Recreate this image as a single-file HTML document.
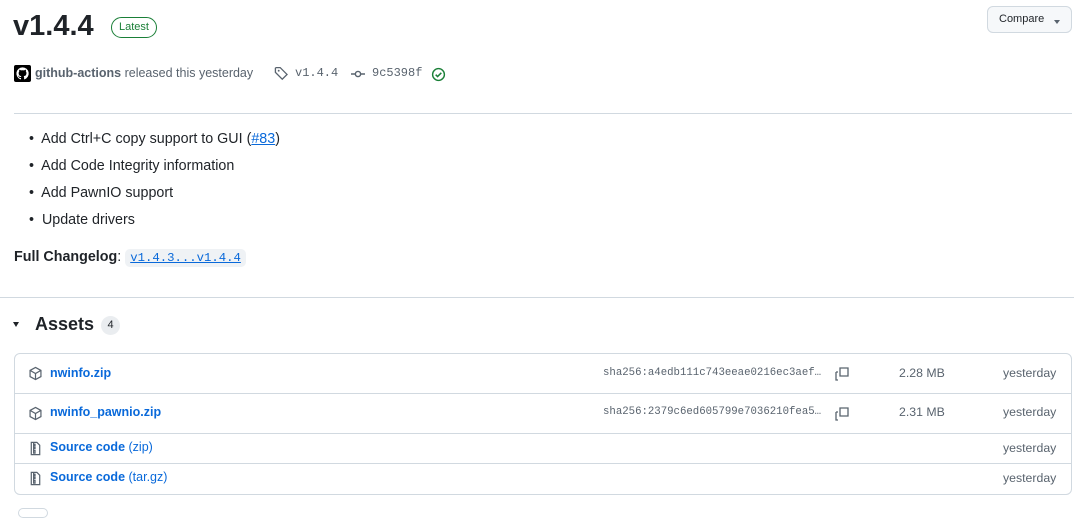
<!DOCTYPE html>
<html><head><meta charset="utf-8"><style>
*{margin:0;padding:0;box-sizing:border-box}
body{width:1074px;height:511px;overflow:hidden;background:#fff;font-family:"Liberation Sans",sans-serif;color:#1f2328;position:relative}
.a{position:absolute;white-space:nowrap}
.mono{font-family:"Liberation Mono",monospace}
.blue{color:#0969da}
.gray{color:#59636e}
.row{position:absolute;left:14px;width:1058px;border-top:1px solid #d1d9e0}
</style></head><body>
<div class="a" style="left:13px;top:6px;font-size:29px;font-weight:bold;line-height:40px">v1.4.4</div>
<div class="a" style="left:111px;top:17px;width:46px;height:21px;border:1px solid #1a7f37;border-radius:11px;color:#1a7f37;font-size:11px;text-align:center;line-height:19px">Latest</div>
<div class="a" style="left:987px;top:6px;width:85px;height:27px;border:1px solid #d1d9e0;border-radius:6px;background:#f6f8fa;font-size:11px;line-height:24px;padding-left:11px">Compare <span style="position:absolute;left:66px;top:13px;width:0;height:0;border-left:3.5px solid transparent;border-right:3.5px solid transparent;border-top:4px solid #59636e"></span></div>

<div class="a" style="left:14px;top:65px;width:17px;height:17px;background:#000;border-radius:2px"><svg width="17" height="17" viewBox="0 0 16 16"><path fill="#fff" d="M8 2.2a5.8 5.8 0 0 0-1.8 11.3c.3 0 .4-.1.4-.3v-1c-1.600.3-2-.8-2-.8-.3-.7-.7-.9-.7-.9-.5-.4 0-.4 0-.4.6 0 .9.6.9.6.5.9 1.4.6 1.800.5 0-.4.2-.6.4-.8-1.300-.1-2.600-.6-2.600-2.800 0-.6.2-1.200.6-1.600-.1-.1-.3-.7 0-1.500 0 0 .5-.2 1.600.6a5.500 5.500 0 0 1 2.900 0c1.100-.8 1.600-.6 1.600-.6.3.8.1 1.400 0 1.500.4.4.6 1 .6 1.600 0 2.200-1.300 2.700-2.600 2.800.2.2.4.6.4 1.100v1.700c0 .2.1.3.4.3A5.800 5.800 0 0 0 8 2.200z"/></svg></div>
<div class="a" style="left:35px;top:66px;font-size:12.5px"><b style="color:#59636e">github-actions</b> <span class="gray">released this yesterday</span></div>
<svg class="a" style="left:274px;top:66px" width="15" height="15" viewBox="0 0 16 16"><path fill="none" stroke="#59636e" stroke-width="1.4" d="M1.5 2.3v4.5l7.3 7.3 5.1-5.1-7.3-7.3H2.3z"/><circle cx="5" cy="5" r="1" fill="#59636e"/></svg>
<div class="a mono gray" style="left:295px;top:66px;font-size:12px">v1.4.4</div>
<svg class="a" style="left:350px;top:67px" width="16" height="14" viewBox="0 0 16 14"><circle cx="8" cy="7" r="2.6" fill="none" stroke="#59636e" stroke-width="1.4"/><path d="M1 7h4.4M10.6 7H15" stroke="#59636e" stroke-width="1.4"/></svg>
<div class="a mono gray" style="left:372px;top:66px;font-size:12px">9c5398f</div>
<svg class="a" style="left:431px;top:67px" width="15" height="15" viewBox="0 0 16 16"><circle cx="8" cy="8" r="6.3" fill="none" stroke="#1a7f37" stroke-width="1.5"/><path d="M5 8.2l2 2 4-4" fill="none" stroke="#1a7f37" stroke-width="1.6"/></svg>

<div class="a" style="left:14px;top:113px;width:1058px;height:1px;background:#d1d9e0"></div>
<div class="a" style="left:29px;top:129px;font-size:14.3px;line-height:20px">
<div style="height:27px">•&nbsp; Add Ctrl+C copy support to GUI (<span class="blue" style="text-decoration:underline">#83</span>)</div>
<div style="height:27px">•&nbsp; Add Code Integrity information</div>
<div style="height:27px">•&nbsp; Add PawnIO support</div>
<div style="height:27px">•&nbsp; Update drivers</div>
</div>
<div class="a" style="left:14px;top:247px;font-size:14.3px;line-height:20px"><b>Full Changelog</b>: <span class="mono blue" style="background:#eff2f5;border-radius:5px;padding:2px 5px;font-size:12.3px;text-decoration:underline">v1.4.3...v1.4.4</span></div>
<div class="a" style="left:0;top:297px;width:1074px;height:1px;background:#d1d9e0"></div>
<div class="a" style="left:13px;top:322px;width:0;height:0;border-left:3.5px solid transparent;border-right:3.5px solid transparent;border-top:5px solid #1f2328"></div>
<div class="a" style="left:35px;top:313px;font-size:18px;font-weight:bold;line-height:22px">Assets</div>
<div class="a" style="left:101px;top:316px;width:19px;height:19px;border-radius:10px;background:#eaedf0;font-size:11px;text-align:center;line-height:19px">4</div>

<div class="a" style="left:14px;top:353px;width:1058px;height:142px;border:1px solid #d1d9e0;border-radius:6px"></div>
<div class="row" style="top:393px"></div><div class="row" style="top:433px"></div><div class="row" style="top:463px"></div>

<svg class="a" style="left:28px;top:366px" width="15" height="15" viewBox="0 0 16 16"><path fill="none" stroke="#59636e" stroke-width="1.3" d="M8 1.5l5.8 3.2v6.6L8 14.5l-5.8-3.2V4.7zM2.2 4.7L8 8l5.8-3.3M8 8v6.5"/></svg>
<div class="a blue" style="left:50px;top:366px;font-size:12.5px;font-weight:bold">nwinfo.zip</div>
<svg class="a" style="left:28px;top:406px" width="15" height="15" viewBox="0 0 16 16"><path fill="none" stroke="#59636e" stroke-width="1.3" d="M8 1.5l5.8 3.2v6.6L8 14.5l-5.8-3.2V4.7zM2.2 4.7L8 8l5.8-3.3M8 8v6.5"/></svg>
<div class="a blue" style="left:50px;top:405px;font-size:12.5px;font-weight:bold">nwinfo_pawnio.zip</div>
<svg class="a" style="left:28px;top:441px" width="15" height="15" viewBox="0 0 16 16"><path fill="none" stroke="#59636e" stroke-width="1.3" d="M3.5 1.5h6l3 3v10h-9zM6 2v1.5h1.5V5H6v1.5h1.5V8H6v2h1.5v3H6z"/></svg>
<div class="a" style="left:50px;top:440px;font-size:12.5px"><b class="blue">Source code</b> <span class="blue">(zip)</span></div>
<svg class="a" style="left:28px;top:471px" width="15" height="15" viewBox="0 0 16 16"><path fill="none" stroke="#59636e" stroke-width="1.3" d="M3.5 1.5h6l3 3v10h-9zM6 2v1.5h1.5V5H6v1.5h1.5V8H6v2h1.5v3H6z"/></svg>
<div class="a" style="left:50px;top:470px;font-size:12.5px"><b class="blue">Source code</b> <span class="blue">(tar.gz)</span></div>

<div class="a mono gray" style="left:603px;top:367px;font-size:10.7px">sha256:a4edb111c743eeae0216ec3aef…</div>
<div class="a mono gray" style="left:603px;top:406px;font-size:10.7px">sha256:2379c6ed605799e7036210fea5…</div>
<svg class="a" style="left:834px;top:366px" width="16" height="16" viewBox="0 0 16 16"><path fill="none" stroke="#59636e" stroke-width="1.3" d="M2 6v8h2M2 6h2M6 2h8v8H6z"/></svg>
<svg class="a" style="left:834px;top:406px" width="16" height="16" viewBox="0 0 16 16"><path fill="none" stroke="#59636e" stroke-width="1.3" d="M2 6v8h2M2 6h2M6 2h8v8H6z"/></svg>
<div class="a gray" style="left:899px;top:366px;font-size:12.3px">2.28 MB</div>
<div class="a gray" style="left:899px;top:405px;font-size:12.3px">2.31 MB</div>
<div class="a gray" style="left:1003px;top:366px;font-size:12.3px">yesterday</div>
<div class="a gray" style="left:1003px;top:405px;font-size:12.3px">yesterday</div>
<div class="a gray" style="left:1003px;top:441px;font-size:12.3px">yesterday</div>
<div class="a gray" style="left:1003px;top:471px;font-size:12.3px">yesterday</div>
<div class="a" style="left:18px;top:508px;width:30px;height:10px;border:1px solid #d1d9e0;border-radius:6px"></div>
</body></html>
